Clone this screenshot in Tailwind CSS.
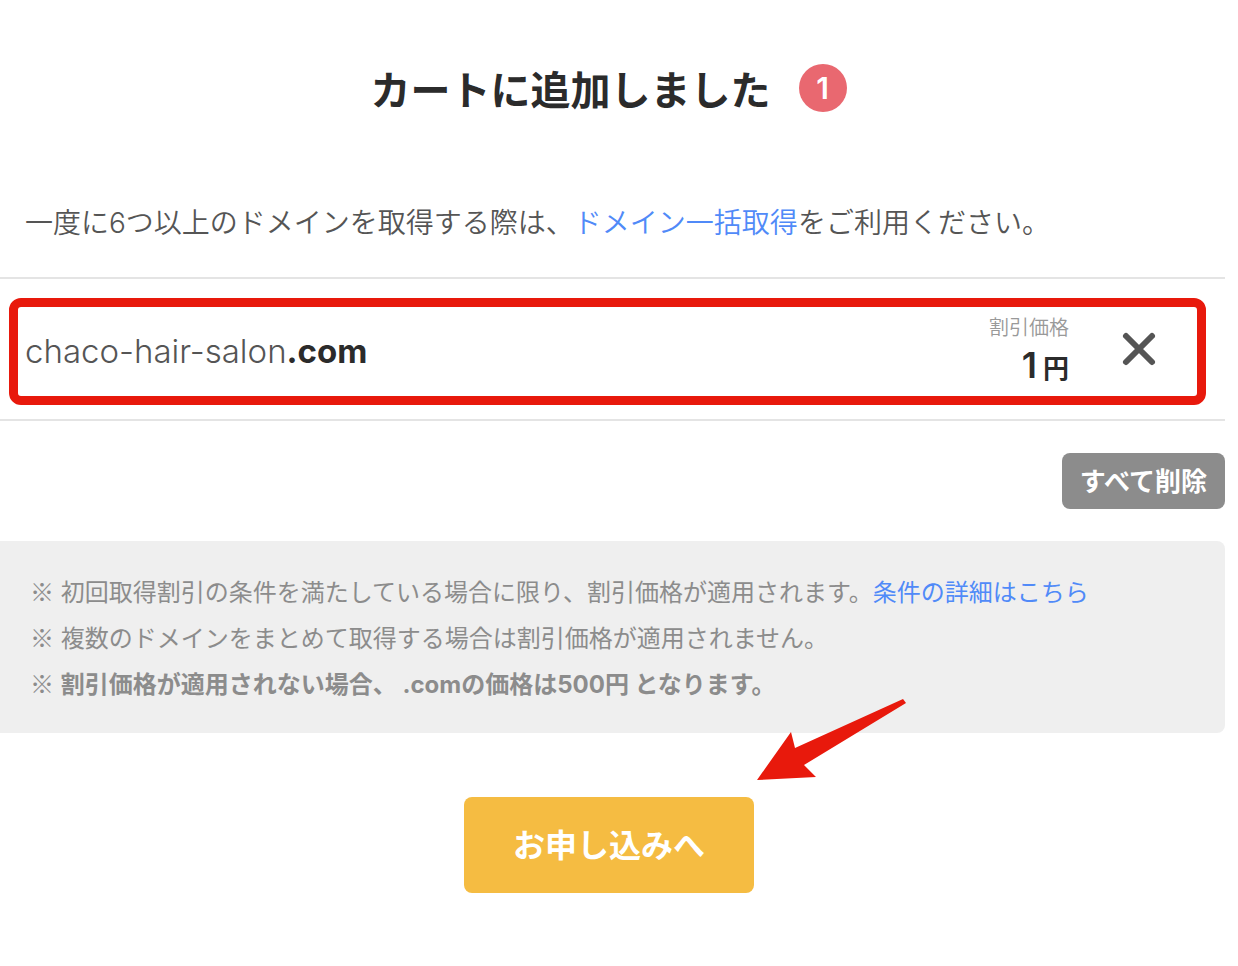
<!DOCTYPE html>
<html lang="ja">
<head>
    <title>カートに追加しました</title>
    <meta charset="UTF-8">
    <meta name="viewport" content="width=device-width, initial-scale=1.0">
    <script src="https://cdn.jsdelivr.net/npm/@tailwindcss/browser@4"></script>
</head>
<body class="bg-white font-[Inter,'Noto_Sans_CJK_JP',sans-serif] text-[#555]">
    <main class="pt-[60px] pr-[13px] pb-18">
        <!-- 見出し -->
        <div class="flex items-center justify-center gap-7 pr-2">
            <h1 class="font-['Noto_Sans_CJK_JP',sans-serif] text-[40px] leading-[56px] font-bold text-[#2b2b2b]">カートに追加しました</h1>
            <span class="flex size-12 items-center justify-center rounded-full bg-[#e96870] text-[30px] font-semibold text-white">1</span>
        </div>

        <p class="mt-[85px] pl-[25px] text-[28px] leading-[44px] font-[350]">一度に6つ以上のドメインを取得する際は、<a href="#" class="text-[#508af8]">ドメイン一括取得</a>をご利用ください。</p>

        <!-- カートの中身 -->
        <div class="relative mt-8 flex h-36 items-center justify-between border-y-2 border-[#e4e4e4] pl-[25px]">
            <p class="pt-1 text-[33px] leading-[44px] font-light">chaco-hair-salon<b class="font-bold text-[#2b2b2b]">.com</b></p>
            <div class="flex items-center pr-[66px]">
                <div class="pt-1 text-right">
                    <p class="text-[20px] leading-[32px] font-[350] text-[#999]">割引価格</p>
                    <p class="text-[26px] leading-[42px] font-bold text-[#2b2b2b]"><span class="mr-[6px] text-[36px] font-semibold">1</span>円</p>
                </div>
                <button type="button" aria-label="削除" class="ml-[50px] flex size-10 items-center justify-center">
                    <svg class="size-10" viewBox="0 0 40 40" fill="none" stroke="#555" stroke-width="6" stroke-linecap="round">
                        <path d="M7 7L33 33M33 7L7 33" />
                    </svg>
                </button>
            </div>
            <div class="pointer-events-none absolute top-[19px] right-[19px] bottom-[14px] left-[9px] rounded-xl border-[9px] border-[#e8190c]"></div>
        </div>

        <div class="mt-8 flex justify-end">
            <button type="button" class="h-14 rounded-lg bg-[#8c8c8c] px-[18px] pb-1 font-['Noto_Sans_CJK_JP',sans-serif] text-[26px] font-bold text-white">すべて削除</button>
        </div>

        <!-- 注意事項 -->
        <div class="mt-8 rounded-r-lg bg-[#efefef] pt-[29px] pb-[25px] pl-[30px] text-[24px] leading-[46px] text-[#8c8c8c]">
            <p><span class="font-['Noto_Sans_CJK_JP',sans-serif] leading-none">※</span> 初回取得割引の条件を満たしている場合に限り、割引価格が適用されます。<a href="#" class="text-[#508af8]">条件の詳細はこちら</a></p>
            <p><span class="font-['Noto_Sans_CJK_JP',sans-serif] leading-none">※</span> 複数のドメインをまとめて取得する場合は割引価格が適用されません。</p>
            <p><span class="font-['Noto_Sans_CJK_JP',sans-serif] leading-none">※</span> <b class="font-bold">割引価格が適用されない場合、 .comの価格は500円 となります。</b></p>
        </div>

        <div class="mt-16 flex justify-center pr-[7px]">
            <button type="button" class="relative h-24 w-[290px] rounded-lg bg-[#f5bc42] pb-1 font-['Noto_Sans_CJK_JP',sans-serif] text-[32px] font-bold text-white">
                お申し込みへ
                <svg class="absolute -top-[99px] left-[292px] h-[84px] w-[152px]" viewBox="0 0 152 84" fill="#e8190c">
                    <path d="M1 82L35 34L39 50L147 1L150 5L48 67L60 79Z" />
                </svg>
            </button>
        </div>
    </main>
</body>
</html>
